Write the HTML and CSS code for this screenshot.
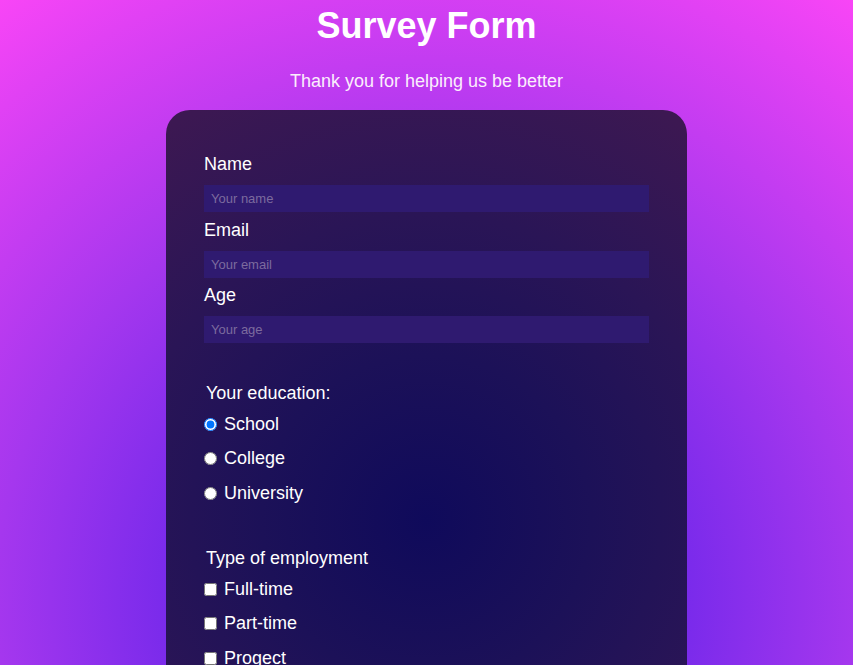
FILE: index.html
```html
<!DOCTYPE html>
<html lang="en">
<head>
<meta charset="utf-8">
<title>Survey Form</title>
<link rel="stylesheet" href="styles.css">
</head>
<body>
  <h1 class="title">Survey Form</h1>
  <p class="subtitle">Thank you for helping us be better</p>
  <form class="card">
    <div class="field">
      <label class="field-label" for="name">Name</label>
      <input class="text-input" id="name" type="text" placeholder="Your name">
    </div>
    <div class="field">
      <label class="field-label" for="email">Email</label>
      <input class="text-input" id="email" type="email" placeholder="Your email">
    </div>
    <div class="field">
      <label class="field-label" for="age">Age</label>
      <input class="text-input" id="age" type="number" placeholder="Your age">
    </div>

    <div class="group group-first">
      <div class="group-label">Your education:</div>
      <div class="options">
        <div class="option"><input class="choice" type="radio" name="edu" id="school" checked><label for="school">School</label></div>
        <div class="option"><input class="choice" type="radio" name="edu" id="college"><label for="college">College</label></div>
        <div class="option"><input class="choice" type="radio" name="edu" id="university"><label for="university">University</label></div>
      </div>
    </div>

    <div class="group group-next">
      <div class="group-label">Type of employment</div>
      <div class="options">
        <div class="option"><input class="choice" type="checkbox" id="full"><label for="full">Full-time</label></div>
        <div class="option"><input class="choice" type="checkbox" id="part"><label for="part">Part-time</label></div>
        <div class="option"><input class="choice" type="checkbox" id="project"><label for="project">Progect</label></div>
      </div>
    </div>
  </form>
</body>
</html>
```

FILE: styles.css
```css
html {
  background: radial-gradient(circle at 50% 600px, #6a26ea 200px, #a537ee 430px, #ff46f7 760px);
  background-color: #ff46f7;
}

body {
  margin: 0;
  font-family: "Liberation Sans", Arial, sans-serif;
  color: #fff;
  padding-bottom: 60px;
}

.title {
  margin: 0;
  padding-top: 5px;
  font-size: 36px;
  line-height: 41px;
  font-weight: bold;
  text-align: center;
}

.subtitle {
  margin: 25px 0 0;
  font-size: 18px;
  line-height: 21px;
  text-align: center;
  color: #fbeefc;
}

.card {
  width: 521px;
  box-sizing: border-box;
  margin: 18px auto 0;
  padding: 42px 38px 60px;
  border-radius: 24px;
  background: radial-gradient(circle 470px at 50% 410px, #0f0a5b 0%, #1c1158 35%, #2a1556 65%, #3c1852 100%);
  display: flex;
  flex-direction: column;
}

.field {
  display: flex;
  flex-direction: column;
  margin-bottom: 5.5px;
}

.field-label {
  font-size: 18px;
  line-height: 21px;
  padding-top: 2px;
  margin-bottom: 10px;
}

.text-input {
  height: 27px;
  box-sizing: border-box;
  border: none;
  outline: none;
  padding: 0 7px;
  background: #2f1a70;
  color: #fff;
  font-family: "Liberation Sans", Arial, sans-serif;
  font-size: 13px;
}

.text-input::placeholder {
  color: #7c6b9e;
}

.group-first {
  margin-top: 34px;
}

.group-next {
  margin-top: 44px;
}

.group-label {
  font-size: 18px;
  line-height: 21px;
  padding-left: 2px;
}

.options {
  display: flex;
  flex-direction: column;
  gap: 13.5px;
  margin-top: 10px;
}

.option {
  font-size: 18px;
  line-height: 21px;
}

.choice {
  width: 13px;
  height: 13px;
  margin: 0 7px 0 0;
  vertical-align: -1px;
}
```
